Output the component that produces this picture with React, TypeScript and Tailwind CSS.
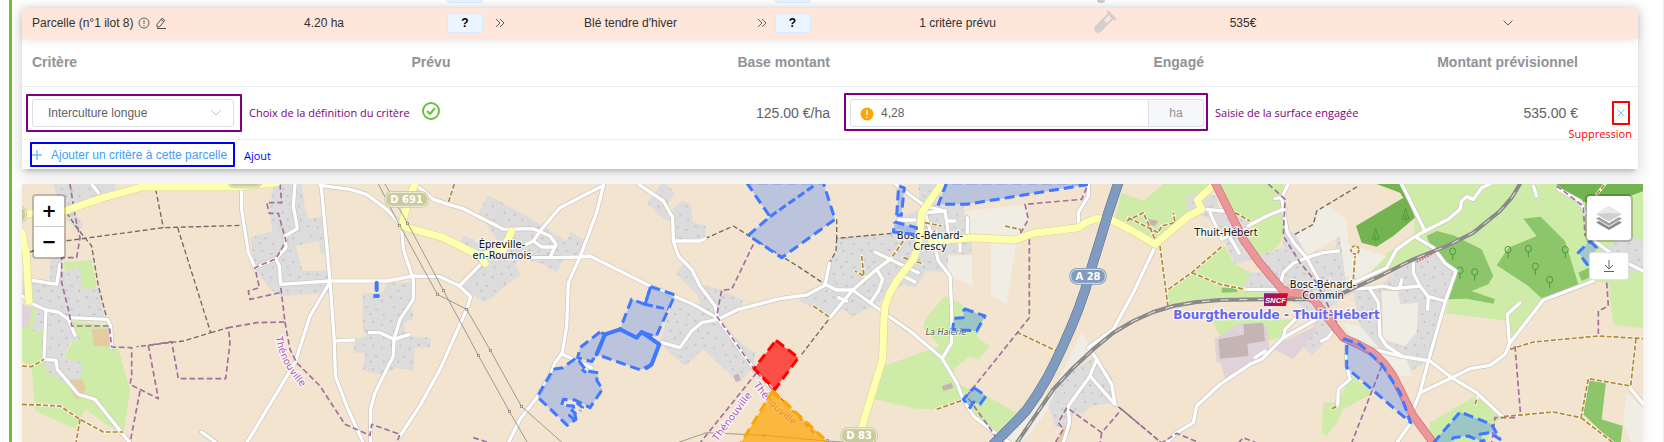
import type { ReactNode } from "react"

const areas = {
  residential: [
    "160,24 345,24 350,50 215,95 250,150 235,165 200,130 200,100 170,60",
    "150,250 185,240 185,290 195,285 240,275 245,340 290,335 300,345 312,420 330,425 215,430 220,465 245,488 210,500 190,545 248,560 238,625 190,620 140,585 130,550 138,470 98,465 110,400 66,360 66,318 150,322",
    "820,24 905,24 915,100 925,130 968,122 975,235 960,232 957,195 888,210 908,285 985,283 990,350 845,360 810,340 765,275 750,185 818,165 808,110",
    "1160,320 1245,320 1235,395 1240,430 1212,440 1215,480 1293,485 1290,515 1245,515 1240,585 1190,575 1145,598 1088,582 1095,530 1060,530 1065,490 1100,480 1088,460 1088,352 1150,350",
    "1465,58 1570,115 1650,165 1700,195 1712,168 1760,195 1735,235 1690,250 1670,290 1630,265 1560,245 1545,270 1562,295 1455,380 1385,335 1440,265 1380,200 1395,178 1440,205 1490,190 1435,110",
    "1985,24 2000,24 2025,55 1995,90 2015,135 1990,130 1940,80",
    "2045,75 2070,80 2080,140 2118,148 2115,188 2020,190 2020,100",
    "2050,260 2080,275 2105,325 2160,340 2230,375 2220,395 2160,430 2200,480 2245,520 2268,530 2260,570 2220,622 2110,520 2055,570 2010,530 1980,500 2000,430 2025,370 2100,395 2095,360 2030,295",
    "2755,24 2840,24 2800,80 2890,90 2900,180 2915,190 2915,235 2845,235 2840,290 2780,285 2745,335 2710,325 2610,395 2555,422 2530,400 2490,425 2400,375 2400,355 2475,320 2488,260 2508,225 2510,185 2675,175 2690,130 2760,100",
    "3290,540 3270,520 3335,600 3345,680 3270,690 3250,715 3220,715 3200,760 3165,750 3145,690 3190,600",
    "3600,50 3650,60 3655,100 3750,140 3750,205 3770,240 3760,250 3705,265 3670,190 3630,130 3560,100 3560,60",
    "3850,165 3885,170 3920,240 3950,225 4005,235 4010,185 4020,182 4035,300 4050,350 4140,330 4180,290 4245,255 4300,230 4365,290 4375,370 4335,375 4300,540 4235,585 4210,580 4210,545 4140,520 4080,450 4060,350 3980,400 4000,470 3935,540 3905,505 3955,430 3890,380 3730,335 3750,290 3815,285 3770,240 3850,215",
    "4870,180 4930,190 4930,290 4840,270 4800,240 4840,200",
  ],
  grass: [
    "190,258 275,252 290,335 230,340 240,275 195,285",
    "66,400 110,390 100,465 138,470 130,550 145,585 170,590 235,625 245,560 190,550 220,490 215,435 330,450 338,515 355,520 390,640 370,780 255,700 225,758 105,705 95,570 66,555",
    "2835,360 2890,385 2890,400 2955,420 2930,485 2970,510 2935,550 2910,540 2860,580 2875,625 2960,660 3050,710 3000,775 2980,770 2885,670 2800,700 2750,698 2625,670 2650,570 2820,510 2770,455 2775,430",
    "3365,50 3430,75 3490,24 3640,24 3600,60 3590,90 3560,125 3460,205 3340,140",
    "3645,24 3850,24 3855,160 3840,200 3810,235 3770,250 3740,180 3660,30",
    "4205,24 4930,24 4930,458 4840,445 4825,320 4770,315 4630,370 4525,500 4525,435 4335,412 4370,290 4300,230 4240,250 4100,310 4080,320 4160,230 4240,190 4245,100",
    "3575,292 3670,200 3700,260 3750,290 3740,335 3800,350 3790,375 3600,370 3505,390 3505,340",
    "3635,430 3880,430 3850,480 3790,500 3790,440 3730,450 3660,480",
    "4055,600 4120,650 4030,700 4010,740 3980,780 3965,770 3970,680 4010,680",
    "4290,740 4435,655 4510,720 4480,745 4460,801 4290,801",
  ],
  wood: [
    "4130,24 4205,24 4220,60 4245,125 4180,180 4130,212 4085,200 4068,150 4210,65 4200,50",
    "4670,24 4930,24 4930,45 4890,60 4880,90 4760,80 4710,60",
  ],
  golf: [
    "4280,180 4310,165 4360,178 4445,220 4480,300 4465,325 4415,345 4485,370 4480,383 4400,368 4340,370 4370,290 4300,230",
    "4570,128 4622,122 4695,195 4735,325 4630,372 4585,330 4490,268 4525,215 4610,180",
    "4735,290 4765,275 4780,300 4745,315",
    "4765,610 4818,618 4805,730 4868,750 4862,801 4840,801 4750,715",
    "3665,335 3710,335 3712,348 3665,350",
  ],
  pale: [
    "3970,80 4040,130 4050,300 4030,300 4020,180 3920,240 3885,175 3940,150",
    "4030,200 4160,240 4090,310 4050,330",
    "2900,105 3080,85 3090,130 3050,195 3020,385 2972,360 2972,195 2900,195",
    "2845,240 2915,237 2918,333 2840,295",
    "3245,470 3270,520 3100,760 3060,801 3000,801 3160,640",
    "4145,345 4195,345 4200,385 4255,380 4250,470 4215,510 4150,490",
    "4030,440 4080,450 4140,520 4220,545 4235,600 4190,600 4060,500",
    "4880,650 4930,700 4930,801 4895,801 4870,740",
  ],
  industrial: [
    "3645,490 3720,440 3800,450 3810,530 3675,610",
    "3840,500 3950,450 3945,470 3880,550 3815,515",
    "66,385 98,395 85,455 66,450",
    "3643,485 3665,485 3665,560 3650,560",
  ],
  warehouse: [
    "3655,490 3740,475 3745,540 3660,548",
    "3730,445 3790,440 3795,495 3735,505",
    "3440,128 3475,135 3465,150 3440,145",
    "2825,630 2855,620 2860,635 2830,645",
    "2200,600 2215,592 2222,612 2208,618",
  ],
  playground: [
    "275,458 328,458 328,512 282,510",
    "215,612 245,610 258,635 250,655 230,672 212,640",
    "3190,750 3215,755 3190,801 3170,801",
  ],
}

const whiteRoads = [
  "275,24 295,50",
  "725,24 725,100 745,230 765,275 828,248 858,215 855,180 892,158 880,90 885,24",
  "828,248 838,270 842,325 990,315 1160,315 1240,300 1320,302 1378,330 1445,262",
  "963,24 975,150 990,315 1003,495 1006,600 1040,690 1090,801",
  "960,28 1050,40 1100,55 1160,100 1205,150 1210,220 1240,310 1240,370 1200,430 1182,490 1180,540 1125,650 1112,700 1112,801",
  "990,318 930,420 885,560 740,801",
  "1003,495 1062,492",
  "1108,470 1140,470 1182,490 1228,475",
  "90,312 170,325 180,265",
  "66,360 100,385 138,402 175,408 205,430 225,478",
  "138,402 132,550 168,553 172,580 235,655 285,670 390,801",
  "205,425 322,430 332,450 335,515",
  "605,768 650,801",
  "1200,780 1262,685 1320,580 1400,400 1412,362 1378,330",
  "1245,24 1300,70 1345,85 1390,98 1510,160 1600,158 1650,180 1668,205 1650,245 1540,245",
  "1650,245 1740,243 1770,240 1950,330 2080,385 2150,425",
  "1810,28 1680,95 1620,165 1600,195 1580,205",
  "1600,195 1625,213 1665,213",
  "1810,28 1790,110 1740,243 1705,320 1700,450 1687,530 1665,560 1650,600 1610,665 1560,730 1525,801",
  "1687,535 1775,575",
  "1915,24 1990,75 2018,125 2020,195 2035,240 2075,280 2100,330 2145,390 2155,430 2270,590 2450,780",
  "2020,195 2100,195 2115,188",
  "2155,430 2215,400 2340,368 2420,357 2475,328 2488,262",
  "2155,430 2105,440 2075,465 2040,515 1985,500",
  "2475,325 2510,342 2558,342 2630,280 2670,250",
  "2625,228 2670,250 2755,290",
  "2710,300 2745,318",
  "2490,425 2558,342 2665,420 2730,465 2825,545 2870,620 2890,670 2920,720 2990,775 3030,801",
  "2515,365 2540,375",
  "2630,280 2648,310 2635,345 2615,375",
  "2685,24 2775,90 2835,105 2845,170",
  "2775,110 2805,215 2815,255 2850,300 2855,400 2855,500 2828,545",
  "2775,110 2835,105",
  "2840,135 2865,135",
  "2902,125 2902,175",
  "2880,195 2880,225",
  "2695,132 2745,132",
  "3265,24 3265,60 3235,110 3235,140",
  "3465,212 3400,350 3340,460 3265,515 3290,550 3335,625 3345,685",
  "3290,550 3270,600 3205,690 3208,740 3190,801",
  "3270,600 3345,685",
  "3500,801 3530,770 3580,740 3590,690 3660,625 3750,565 3785,550 3850,485 3950,430",
  "3765,545 3795,525",
  "3615,100 3670,105",
  "3630,110 3665,190 3710,165 3740,160",
  "3690,185 3718,232",
  "3745,150 3800,120 3855,98",
  "3865,24 3845,65 3855,130 3862,170 3885,205 3920,245 3955,310",
  "3825,67 3845,65",
  "3840,330 3850,290 3880,262 3920,245 3970,230 4015,225",
  "3735,340 3830,340",
  "4205,24 4275,165 4345,130 4380,100 4385,75 4400,62 4420,70 4445,35 4470,24",
  "4275,165 4240,185 4190,220 4160,275 4050,325",
  "4250,185 4300,215 4335,262 4368,285 4335,380 4285,555 4260,650 4240,700",
  "4230,745 4190,801",
  "4050,340 4115,335 4150,330 4180,338 4260,330 4240,290 4240,262",
  "4260,330 4285,362 4335,375",
  "4285,362 4283,400",
  "4200,335 4205,312",
  "4110,340 4135,380 4140,480 4160,510 4205,540",
  "4100,515 4200,540 4290,555 4355,605 4430,650 4505,720",
  "4260,650 4355,605 4410,578 4470,568 4515,535 4530,500 4630,372 4780,315",
  "4528,500 4522,415 4560,380",
  "4890,635 4930,685",
  "4040,500 4040,570 4050,610 4015,640 4013,690",
  "3850,485 3855,460 3890,425",
  "3995,470 3985,485 3965,495",
  "4600,30 4610,60",
  "4785,195 4850,245 4930,285",
  "4675,40 4740,75 4755,110",
]

const yellowRoads = [
  "66,115 195,105 300,68 430,32 720,32 830,20",
  "66,170 78,230 87,375",
  "1245,24 1225,70 1205,150 1330,185 1440,240 1455,262",
  "1440,240 1510,222 1535,165",
  "2825,24 2765,110 2755,210 2740,250 2690,315 2670,350 2655,390 2652,430 2648,550 2620,640 2585,755",
  "2795,195 2920,185 3045,192 3100,172 3235,155 3260,138 3290,128 3330,130 3390,160 3465,205 3565,120 3605,100 3592,72 3645,24",
]

const motorway =
  "3355,20 3325,110 3298,200 3276,270 3256,340 3235,400 3215,450 3191,505 3165,560 3142,605 3112,655 3080,702 3040,745 2980,805"
const redRoad =
  "3645,20 3690,110 3730,190 3780,262 3830,320 3845,340 3870,350 3920,355 3945,375 3975,415 4030,485 4080,508 4120,530 4155,565 4180,600 4210,660 4240,720 4300,801"
const rail =
  "3050,801 3105,720 3160,640 3220,575 3280,520 3340,470 3400,435 3460,408 3520,390 3590,378 3660,372 3800,370 3930,370 4020,355 4130,305 4240,250 4340,210 4420,170 4500,105 4535,65 4560,24"

const boundaries = [
  "210,24 225,120 240,185 230,245 185,245 185,320 205,400 215,450 328,450 335,513 395,515 395,600 390,625 475,668 445,508 515,497 535,608 677,608 690,500 685,455 770,440 855,438 842,330",
  "420,645 390,801",
  "855,438 870,520 890,560 960,630 1035,745 1110,778 1115,745 1200,775 1190,801",
  "840,24 845,80 800,80 808,112 835,112 858,195 828,248 765,275 778,335 745,345 750,370 840,350",
  "1420,785 1470,801",
  "2260,205 2195,340 2165,342 2150,420 2270,590 2100,801",
  "2270,590 2450,780",
  "3260,35 3245,70 3075,85 3085,130 3060,175 3088,190 3088,425 2900,660 2990,785",
  "3200,695 3175,740 3190,760 3165,801",
  "3208,700 3305,770 3365,700 3485,801 3530,772 3600,801",
  "3305,770 3300,801",
  "3805,24 3855,70 3850,180 3900,260 3950,320 4020,460",
  "4145,570 4055,801",
  "4545,510 4562,720",
  "4820,320 4825,390 4795,405 4795,480",
  "4545,725 4485,725 4475,801",
  "3715,801 3730,785 3770,801",
  "4670,30 4750,90 4755,180",
]

const tracks = [
  "467,40 490,155",
  "90,228 195,195 490,155 730,148",
  "533,155 632,470 550,495 410,512",
  "632,470 685,455",
  "200,110 230,155 275,210 295,330 320,425",
  "2115,188 2200,150 2400,275 2475,325",
  "2510,130 2510,187 2680,172",
  "2510,187 2508,225 2488,262",
  "2405,535 2490,425",
  "3885,175 3940,145 3950,105 4075,30",
  "3355,692 3485,801",
]

const paths = [
  "66,570 95,572 132,550",
  "66,685 180,690 240,730 310,768 370,768",
  "240,730 228,801",
  "1363,24 1345,80",
  "2585,240 2592,300 2565,285",
  "2710,195 2675,245",
  "2710,245 2765,262",
  "2775,140 2825,150",
  "2440,390 2490,425",
  "3050,468 3170,525",
  "2810,700 2890,672",
  "3015,150 3060,160 3070,180",
  "3380,135 3430,110 3465,190",
  "3385,125 3475,170 3485,150 3525,140 3520,110",
  "3480,210 3505,400",
  "3505,340 3575,290 3670,208",
  "3575,290 3660,325 3735,340",
  "3705,110 3750,135",
  "4060,310 4065,240",
  "4530,520 4600,498 4795,480 4930,488",
  "4908,488 4892,630 4765,608 4743,725 4660,708 4505,722",
  "4743,725 4840,801",
  "4425,685 4432,665",
  "3995,698 4013,690",
  "4790,55 4815,24",
]

const powerLines = [
  "1135,24 1200,150 1312,355 1400,400 1471,523 1564,691 1688,801",
  "1155,24 1222,140 1330,343 1435,538 1528,706 1583,801",
  "2030,801 2120,770 2293,778 2480,795 2530,798",
]

const pylons = [
  [1198, 148], [1222, 142], [1312, 355], [1330, 343], [1400, 400], [1471, 523],
  [1435, 538], [1564, 691], [1528, 706], [2293, 778], [2482, 794],
]

const parcels = [
  "2240,20 2310,122 2245,178 2345,245 2505,130 2470,20",
  "2840,20 2815,85 2900,85 3260,26 3260,20",
  "2690,118 2696,30 2713,36 2704,118",
  "2684,138 2750,155 2745,175 2680,168",
  "1952,332 2025,357 1968,482 1925,468 1910,485 1860,460 1895,370 1935,385",
  "1800,468 1740,515 1733,545 1775,557 1790,535 1815,475",
  "1790,535 1815,475 1860,460 1910,485 1925,468 1978,505 1955,565 1922,582",
  "1660,580 1688,575 1730,545 1760,585 1795,590 1790,612 1807,640 1770,695 1725,672 1690,670 1685,688 1720,690 1728,730 1702,748 1612,662",
  "4030,488 4080,505 4145,565 4200,650 4232,740 4040,575 4040,505",
  "4770,195 4790,215 4765,270 4735,230",
]

const parcelLines = [
  "2310,122 2440,30",
  "1935,385 2005,400",
  "1952,332 1935,385",
  "1713,700 1726,712 1708,718 1722,730",
  "1730,680 1748,695 1740,705",
  "1745,580 1758,590",
]

const greenParcels = [
  "2892,398 2955,420 2930,465 2858,460 2862,427 2890,425",
  "2922,635 2958,660 2940,685 2920,678 2910,695 2890,670",
  "4300,801 4380,708 4475,745 4500,790 4470,770 4440,775 4455,801 4405,780 4360,785 4350,805",
]

const pines = [[4217, 120], [4127, 180]]
const trees = [
  [4358, 235], [4380, 292], [4424, 297], [4585, 227], [4606, 280], [4649, 320], [4524, 230], [4696, 230],
]

function Areas({ points, fill }: { points: string[]; fill: string }) {
  return (
    <g fill={fill}>
      {points.map((p) => (
        <polygon key={p} points={p} />
      ))}
    </g>
  )
}

function Lines({
  points,
  stroke,
  width,
  dash,
}: {
  points: string[]
  stroke: string
  width: number
  dash?: string
}) {
  return (
    <g
      fill="none"
      stroke={stroke}
      strokeWidth={width}
      strokeDasharray={dash}
      strokeLinejoin="round"
      strokeLinecap={dash ? "butt" : "round"}
    >
      {points.map((p) => (
        <polyline key={p} points={p} />
      ))}
    </g>
  )
}

function Place({ x, y, lines }: { x: number; y: number; lines: string[] }) {
  return (
    <text
      textAnchor="middle"
      fontSize="30"
      fill="#111"
      stroke="#fff"
      strokeOpacity="0.7"
      strokeWidth="7"
      paintOrder="stroke"
    >
      {lines.map((line, i) => (
        <tspan key={line} x={x} y={y + i * 34}>
          {line}
        </tspan>
      ))}
    </text>
  )
}

function Shield({ x, y, w, fill, label }: { x: number; y: number; w: number; fill: string; label?: string }) {
  return (
    <g>
      <rect x={x - w / 2} y={y - 25} width={w} height="50" rx="24" fill={fill} />
      <rect x={x - w / 2 + 4} y={y - 21} width={w - 8} height="42" rx="20" fill="none" stroke="#fff" strokeOpacity="0.7" strokeWidth="3" />
      {label && (
        <text x={x} y={y + 11} textAnchor="middle" fontSize="30" fontWeight="700" fill="#fff">
          {label}
        </text>
      )}
    </g>
  )
}

function MapDrawing() {
  return (
    <svg
      viewBox="66 24 4863 777"
      preserveAspectRatio="xMinYMin slice"
      className="block h-full w-full font-['DejaVu_Sans',sans-serif]"
      role="img"
      aria-label="Carte des parcelles"
    >
      <defs>
        <pattern id="houses" width="83" height="71" patternUnits="userSpaceOnUse">
          <path
            d="M8 8l7 3M40 9v6M64 22l6-4M18 36l3 6M46 44l7 2M74 58l-3 6M30 62l6-3"
            stroke="#c6b8b9"
            strokeWidth="4"
          />
        </pattern>
        <linearGradient id="sncf">
          <stop offset="0" stopColor="#8c1d82" />
          <stop offset="1" stopColor="#e2001a" />
        </linearGradient>
        <path id="label-west" d="M827 482 Q838 570 925 655" />
        <path id="label-south" d="M952 797 L1070 640" transform="translate(1200)" />
        <path id="label-road" d="M1060 626 Q1100 690 1200 765" transform="translate(1200)" />
      </defs>
      <rect x="66" y="24" width="4863" height="777" fill="#f2e4cf" />
      <Areas points={areas.grass} fill="#ceeca8" />
      <Areas points={areas.pale} fill="#f0ede5" />
      <Areas points={areas.residential} fill="#dcdcdc" />
      <Areas points={areas.residential} fill="url(#houses)" />
      <Areas points={areas.pale.slice(5)} fill="#f0ede5" />
      <Areas points={areas.industrial} fill="#dfd2d9" />
      <Areas points={areas.warehouse} fill="#c4b4b3" />
      <Areas points={areas.playground} fill="#e6cba2" />
      <Areas points={areas.wood} fill="#73b450" />
      <Areas points={areas.golf} fill="#8dc56b" />
      <polygon points="888,210 957,195 970,283 908,285" fill="#f2e4cf" />
      <g fill="none" stroke="#4f9a3c" strokeWidth="3">
        {pines.map(([x, y]) => (
          <path key={x} d={`M${x} ${y + 15}v-18m0-20l-10 32h20z`} />
        ))}
        {trees.map(([x, y]) => (
          <path key={x} d={`M${x} ${y + 17}v-18m-9-8a9 10 0 1 1 18 0a9 10 0 1 1-18 0`} />
        ))}
      </g>

      <Lines points={tracks} stroke="#6f6a63" width={4} dash="15 8" />
      <Lines points={whiteRoads} stroke="#c9c5c0" width={14} />
      <Lines points={whiteRoads} stroke="#fff" width={10} />
      <Lines points={paths} stroke="#f9f3e8" width={9} />
      <Lines points={paths} stroke="#b18a38" width={5} dash="15 6" />
      <circle cx="4065" cy="222" r="12" fill="none" stroke="#b18a38" strokeWidth="5" strokeDasharray="10 5" />
      <Lines points={boundaries} stroke="#a26f9e" width={5} dash="17 9" />
      <Lines points={yellowRoads} stroke="#dcd9a2" width={25} />
      <Lines points={yellowRoads} stroke="#ffffb0" width={21} />
      <Lines points={[motorway]} stroke="#536a8a" width={30} />
      <Lines points={[motorway]} stroke="#809bc0" width={27} />
      <Lines points={[rail]} stroke="#8a8a8a" width={12} />
      <Lines points={[rail]} stroke="#e8e8e8" width={3} dash="24 32" />
      <Lines points={[redRoad]} stroke="#cf6d78" width={25} />
      <Lines points={[redRoad]} stroke="#eb979a" width={21} />
      <polyline points="4250,258 4298,233" stroke="#f0605a" strokeWidth="5" strokeDasharray="5 4" />
      <Lines points={powerLines} stroke="#a09a90" width={3} />
      <g fill="#eee" stroke="#777" strokeWidth="2">
        {pylons.map(([x, y]) => (
          <rect key={x} x={x - 3} y={y - 3} width="6" height="6" />
        ))}
      </g>

      <Shield x={735} y={12} w={108} fill="#cacb9a" />
      <Shield x={66} y={116} w={30} fill="#cacb9a" />
      <Shield x={1220} y={70} w={134} fill="#cacb9a" label="D 691" />
      <Shield x={2577} y={779} w={114} fill="#cacb9a" label="D 83" />
      <Shield x={3264} y={301} w={112} fill="#809bc0" label="A 28" />

      <Place x={1506} y={215} lines={["Épreville-", "en-Roumois"]} />
      <Place x={2790} y={189} lines={["Bosc-Bénard-", "Crescy"]} />
      <Place x={3678} y={179} lines={["Thuit-Hébert"]} />
      <Place x={3969} y={336} lines={["Bosc-Bénard-", "Commin"]} />
      <text x="2777" y="476" fontSize="24" fontStyle="italic" fill="#555" stroke="#fff" strokeOpacity="0.6" strokeWidth="5" paintOrder="stroke">
        La Haierie
      </text>
      <g fontSize="30" fill="#ad52ae" stroke="#fff" strokeWidth="6" paintOrder="stroke">
        <text>
          <textPath href="#label-west">Thénouville</textPath>
        </text>
        <text>
          <textPath href="#label-south">Thénouville</textPath>
        </text>
        <text>
          <textPath href="#label-road">Thénouville</textPath>
        </text>
      </g>
      <path d="M3792 352h72l-6 38h-66z" fill="url(#sncf)" />
      <text x="3795" y="380" fontSize="23" fontStyle="italic" fontWeight="700" fill="#fff" className="font-['Liberation_Sans',sans-serif]">
        SNCF
      </text>
      <text x="3520" y="428" fontSize="36" fontWeight="700" fill="#6666f5" stroke="#fff" strokeOpacity="0.7" strokeWidth="7" paintOrder="stroke">
        Bourgtheroulde - Thuit-Hébert
      </text>

      <Areas points={parcels} fill="rgba(64,120,255,0.3)" />
      <Areas points={greenParcels} fill="rgba(64,130,255,0.35)" />
      <Lines points={parcels.map((p) => p + " " + p.split(" ")[0])} stroke="#4078ff" width={9} dash="30 15" />
      <Lines points={greenParcels.map((p) => p + " " + p.split(" ")[0])} stroke="#4078ff" width={9} dash="30 15" />
      <Lines points={parcelLines} stroke="#4078ff" width={9} dash="24 10" />
      <Lines
        points={["1790,535 1815,475 1860,460 1910,485 1925,468 1978,505 1955,565 1940,576", "1130,320 1130,342", "1125,360 1134,360"]}
        stroke="#4078ff"
        width={12}
      />
      <g strokeWidth="9" strokeDasharray="30 15" strokeLinejoin="round">
        <polygon points="2318,645 2480,795 2480,830 2205,830" fill="rgba(255,165,0,0.7)" stroke="#ffa500" />
        <polygon points="2328,493 2395,545 2325,640 2262,578" fill="rgba(255,0,0,0.65)" stroke="#f00" />
      </g>
    </svg>
  )
}

function DoubleChevron() {
  return (
    <svg viewBox="0 0 10 10" className="size-[10px]" fill="none" stroke="#606266" aria-hidden="true">
      <path d="M1 1l4 4-4 4M5 1l4 4-4 4" />
    </svg>
  )
}

function HelpButton() {
  return (
    <button
      type="button"
      className="h-5 w-9 rounded-[3px] border border-[#d9ecff] bg-[#ecf5ff] text-xs leading-none font-bold text-black"
    >
      ?
    </button>
  )
}

function TestTube() {
  return (
    <svg viewBox="0 0 20 20" className="size-5 overflow-visible" fill="#d0d0d0" aria-hidden="true">
      <g transform="rotate(45 10 10)">
        <rect x="4" y="-2" width="12" height="3" rx="1" />
        <path fillRule="evenodd" d="M6 0h8v18a4 4 0 0 1-8 0zM8 1v7h4v-7z" />
      </g>
    </svg>
  )
}

// Annotation text laid over the screen
function Note({ className, children }: { className: string; children: ReactNode }) {
  return (
    <span
      className={`pointer-events-none absolute font-['Open_Sans','Noto_Sans',sans-serif] text-[11px] leading-4 whitespace-nowrap ${className}`}
    >
      {children}
    </span>
  )
}

function Frame({ className }: { className: string }) {
  return <span className={`pointer-events-none absolute rounded-[1px] border-2 ${className}`} />
}

function ParcelHeader() {
  return (
    <header className="grid h-[31px] grid-cols-[203fr_198fr_106fr_203fr_103fr_245fr_48fr_230fr_280fr] items-center justify-items-center rounded-t bg-[#ffe6da] pb-px text-xs text-[#303133] shadow-[0_1px_8px_rgba(0,0,0,0.12)]">
      <div className="flex items-center gap-1 justify-self-start pl-[10px] whitespace-nowrap">
        Parcelle (n°1 ilot 8)
        <svg viewBox="0 0 12 12" className="size-3" fill="none" stroke="#606266" aria-hidden="true">
          <circle cx="6" cy="6" r="5" />
          <path d="M6 3v4M6 8v1" />
        </svg>
        <button type="button" aria-label="Modifier" className="ml-px">
          <svg viewBox="0 0 12 12" className="block size-3" fill="none" stroke="#505256" aria-hidden="true">
            <path d="M2 7.500L7 1.200l2.800 2.100-5 6.300L2 10.200zM6 2.600l2.800 2.100M2 11.500h9" />
          </svg>
        </button>
      </div>
      <div>4.20 ha</div>
      <div className="flex items-center gap-3">
        <HelpButton />
        <DoubleChevron />
      </div>
      <div>Blé tendre d'hiver</div>
      <div className="flex items-center gap-2">
        <DoubleChevron />
        <HelpButton />
      </div>
      <div>1 critère prévu</div>
      <TestTube />
      <div>535€</div>
      <button type="button" aria-label="Replier" className="ml-5">
        <svg viewBox="0 0 10 6" className="h-[6px] w-[10px]" fill="none" stroke="#606266" aria-hidden="true">
          <path d="M.5.5L5 5 9.500.5" />
        </svg>
      </button>
    </header>
  )
}

function CriteriaTable() {
  return (
    <table className="w-full table-fixed border-collapse text-sm text-[#606266]">
      <colgroup>
        <col />
        <col className="w-[70px]" />
        <col />
        <col />
        <col />
        <col className="w-[50px]" />
      </colgroup>
      <thead>
        <tr className="h-[47px] border-b border-[#ebeef5] text-[#909399]">
          <th className="px-[10px] pb-px text-left">Critère</th>
          <th className="px-[10px] pb-px text-center">Prévu</th>
          <th className="px-[10px] pb-px text-right">Base montant</th>
          <th className="px-[10px] pb-px text-right">Engagé</th>
          <th className="px-[10px] pb-px text-right">Montant prévisionnel</th>
          <th aria-label="Actions" />
        </tr>
      </thead>
      <tbody>
        <tr className="h-[53px] border-b border-[#ebeef5]">
          <td className="px-[10px]">
            <div className="relative w-[202px]">
              <select
                aria-label="Critère"
                className="block h-7 w-full appearance-none rounded-[3px] border border-[#dcdfe6] bg-white pl-[15px] text-xs"
              >
                <option>Interculture longue</option>
              </select>
              <svg
                viewBox="0 0 12 7"
                className="pointer-events-none absolute top-[10px] right-3 h-[7px] w-3"
                fill="none"
                stroke="#c0c4cc"
                aria-hidden="true"
              >
                <path d="M1 1l5 5 5-5" />
              </svg>
              <Frame className="-inset-y-[5px] -right-2 -left-[6px] border-[#800080]" />
              <Note className="top-[6px] left-[217px] text-[#800080]">Choix de la définition du critère</Note>
            </div>
          </td>
          <td className="pb-1">
            <svg viewBox="0 0 20 20" className="mx-auto size-5" fill="none" stroke="#67c23a" strokeWidth="2" role="img" aria-label="Prévu">
              <circle cx="10" cy="10" r="8" />
              <path d="M6 10l3 3 5-6" />
            </svg>
          </td>
          <td className="px-[10px] text-right">125.00 €/ha</td>
          <td className="px-[10px]">
            <div className="relative flex h-7 text-xs">
              <svg viewBox="0 0 14 14" className="absolute top-2 left-[10px] size-[14px]" aria-hidden="true">
                <circle cx="7" cy="7" r="6.500" fill="#ffa500" />
                <path d="M7 3v5M7 9.500v1.500" stroke="#fff" strokeWidth="1.500" />
              </svg>
              <input
                aria-label="Surface engagée"
                defaultValue="4,28"
                className="min-w-0 flex-1 rounded-l-[3px] border border-[#dcdfe6] pl-[30px]"
              />
              <span className="flex w-[55px] items-center justify-center rounded-r-[3px] border border-l-0 border-[#dcdfe6] bg-[#f5f7fa] text-[#909399]">
                ha
              </span>
              <Frame className="-top-[6px] -right-1 -bottom-1 -left-[6px] border-[#800080]" />
              <Note className="top-[6px] left-full ml-[11px] text-[#800080]">Saisie de la surface engagée</Note>
            </div>
          </td>
          <td className="px-[10px] text-right">535.00 €</td>
          <td>
            <div className="relative ml-6 h-6 w-[18px]">
              <button type="button" aria-label="Supprimer le critère" className="flex size-full items-center justify-center">
                <svg viewBox="0 0 8 8" className="size-2" fill="none" stroke="#79bbff" aria-hidden="true">
                  <path d="M.5.5l7 7M7.500.5l-7 7" />
                </svg>
              </button>
              <Frame className="inset-0 border-[#f00]" />
              <Note className="top-[25px] -right-[2px] text-[#f00]">Suppression</Note>
            </div>
          </td>
        </tr>
      </tbody>
    </table>
  )
}

function MapPanel() {
  return (
    <section className="relative mt-[15px] mr-5 min-h-0 flex-1 shadow-[0_2px_12px_rgba(0,0,0,0.1)]">
      <MapDrawing />
      <div className="absolute top-[10px] left-[10px] flex flex-col rounded border-2 border-black/20 bg-white bg-clip-padding font-['DejaVu_Sans',sans-serif] text-lg font-bold text-black">
        <button type="button" aria-label="Zoom avant" className="h-[31px] w-[30px] border-b border-[#ccc] leading-none">
          +
        </button>
        <button type="button" aria-label="Zoom arrière" className="size-[30px] leading-none">
          −
        </button>
      </div>
      <div className="absolute top-[10px] right-[10px] flex flex-col items-center gap-[10px]">
        <button
          type="button"
          aria-label="Couches"
          className="flex size-12 items-center justify-center rounded-[5px] border-2 border-black/20 bg-white bg-clip-padding"
        >
          <svg viewBox="0 0 26 26" className="size-[26px]" aria-hidden="true">
            <path d="M0 17.500L13 25l13-7.500-3-1.500-10 6-10-6z" fill="#8a8a8a" />
            <path d="M0 13.500L13 21l13-7.500-3-1.500-10 6-10-6z" fill="#a2a2a2" />
            <path d="M0 9L13 1l13 8-13 7.500z" fill="#cfcfcf" />
            <path d="M0 9L13 1l13 8-13-1z" fill="#e9e9e9" />
          </svg>
        </button>
        <button
          type="button"
          aria-label="Télécharger"
          className="flex h-7 w-10 items-center justify-center rounded-[3px] border border-[#dcdfe6] bg-white"
        >
          <svg viewBox="0 0 12 12" className="size-3" fill="none" stroke="#606266" aria-hidden="true">
            <path d="M6 0v9M2 5l4 4 4-4M1 11.500h10" />
          </svg>
        </button>
      </div>
    </section>
  )
}

export default function App() {
  return (
    <main className="flex h-screen overflow-hidden bg-white pl-[9px] font-['Liberation_Sans',Arial,sans-serif]">
      <div className="flex min-w-0 flex-1 flex-col border-r border-l-[3px] border-r-[#ebeef5] border-l-[#67c23a] pl-[10px]">
        {/* end of the previous parcel row */}
        <div className="mr-[25px] grid h-2 grid-cols-[425fr_36fr_292fr_36fr_284fr_12fr_531fr]">
          <span className="col-start-2 h-[3px] rounded-b-[3px] border border-t-0 border-[#d9ecff] bg-[#ecf5ff]" />
          <span className="col-start-4 h-[3px] rounded-b-[3px] border border-t-0 border-[#d9ecff] bg-[#ecf5ff]" />
          <span className="col-start-6 mx-[2px] h-[3px] rounded-b-full bg-[#d0d0d0]" />
        </div>
        <section className="mr-[25px] rounded-t bg-white shadow-[0_5px_5px_-3px_rgba(0,0,0,0.2),0_3px_14px_2px_rgba(0,0,0,0.14)]">
          <ParcelHeader />
          <CriteriaTable />
          <div className="flex h-[29px] items-center pt-px">
            <div className="relative ml-2 h-[25px] w-[205px]">
              <button type="button" className="flex h-full items-center gap-[9px] pl-[2px] text-xs whitespace-nowrap text-[#409eff]">
                <svg viewBox="0 0 10 10" className="size-[10px]" fill="none" stroke="#409eff" aria-hidden="true">
                  <path d="M5 0v10M0 5h10" />
                </svg>
                Ajouter un critère à cette parcelle
              </button>
              <Frame className="inset-0 border-[#00f]" />
              <Note className="top-[6px] left-full ml-[9px] text-[#00f]">Ajout</Note>
            </div>
          </div>
        </section>
        <MapPanel />
      </div>
    </main>
  )
}
